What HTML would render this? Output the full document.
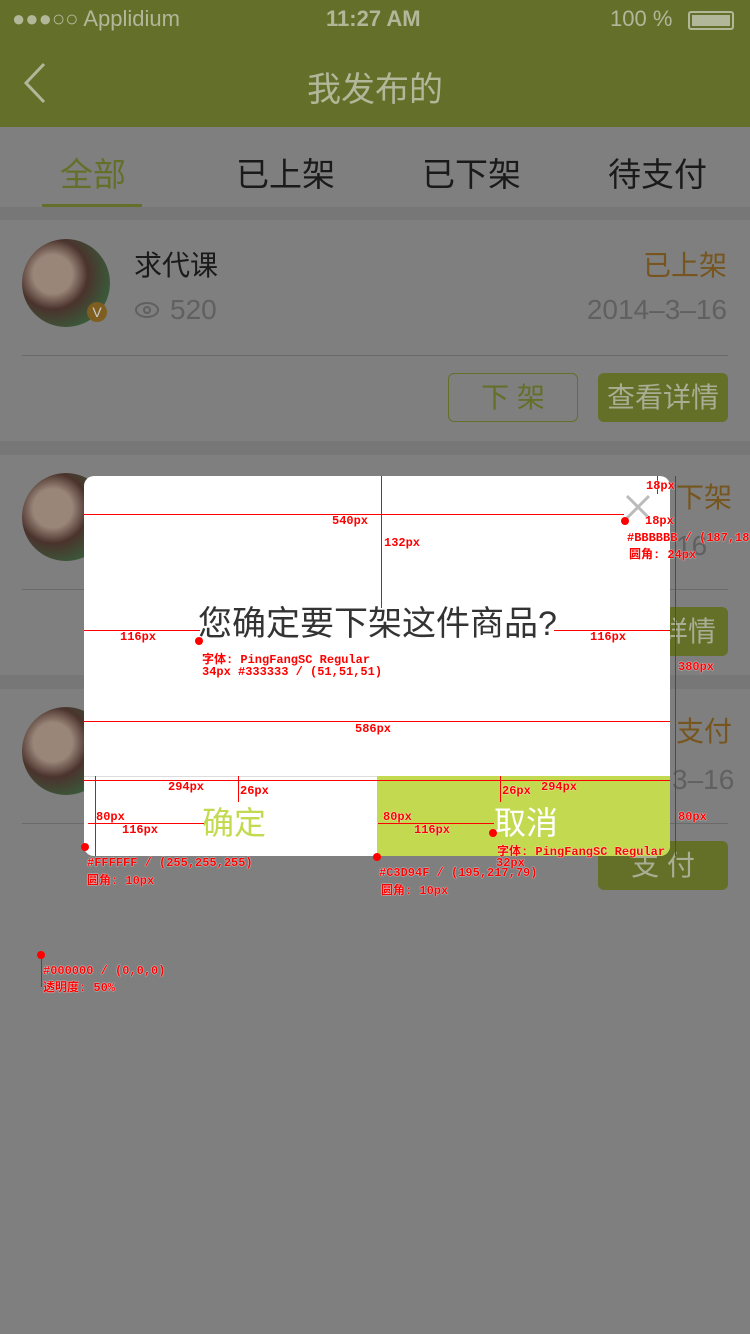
<!DOCTYPE html>
<html><head><meta charset="utf-8"><style>
*{margin:0;padding:0;box-sizing:border-box}
body{width:750px;height:1334px;background:#7f7f7f;position:relative;overflow:hidden;font-family:"Liberation Sans","Noto Sans CJK SC",sans-serif}
.a{position:absolute}
.r{position:absolute;background:#f00}
.lbl{position:absolute;color:#f00;font:bold 12px "Liberation Mono","Noto Sans CJK SC",monospace;white-space:nowrap;text-shadow:0 0 1px #fff,0 0 1px #fff}
.dot{position:absolute;width:8px;height:8px;border-radius:50%;background:#f00}
.av{position:absolute;width:88px;height:88px;border-radius:50%;background:radial-gradient(circle at 35% 40%,#9a8579 0 25%,#4a332c 45%,#3a5a3a 75%,#6d6d6d 100%)}
</style></head><body>
<!-- status + nav -->
<div class="a" style="left:0;top:0;width:750px;height:127px;background:#646f2a"></div>
<div class="a" style="left:12px;top:6px;color:#b2b79a;font-size:22px">●●●○○ Applidium</div>
<div class="a" style="left:326px;top:6px;color:#b2b79a;font-size:22px;font-weight:bold">11:27 AM</div>
<div class="a" style="left:610px;top:6px;color:#b2b79a;font-size:22px">100 %</div>
<div class="a" style="left:688px;top:11px;width:46px;height:19px;border:2px solid #b2b79a;border-radius:3px;padding:2px"><div style="background:#b2b79a;height:100%"></div></div>
<svg class="a" style="left:20px;top:60px" width="30" height="46"><path d="M24 4 L6 23 L24 42" stroke="#b2b79a" stroke-width="3" fill="none"/></svg>
<div class="a" style="left:0;top:62px;width:750px;text-align:center;color:#b2b79a;font-size:34px">我发布的</div>
<!-- tabs -->
<div class="a" style="left:0;top:127px;width:750px;height:80px;background:#7f7f7f"></div>
<div class="a" style="left:60px;top:148px;color:#64702a;font-size:33px">全部</div>
<div class="a" style="left:42px;top:204px;width:100px;height:4px;background:#64702a"></div>
<div class="a" style="left:236px;top:148px;color:#1a1a1a;font-size:33px">已上架</div>
<div class="a" style="left:422px;top:148px;color:#1a1a1a;font-size:33px">已下架</div>
<div class="a" style="left:608px;top:148px;color:#1a1a1a;font-size:33px">待支付</div>
<div class="a" style="left:0;top:207px;width:750px;height:13px;background:#777"></div>
<!-- card 1 -->
<div class="av" style="left:22px;top:239px"></div>
<div class="a" style="left:87px;top:302px;width:20px;height:20px;border-radius:50%;background:#7e5f20;color:#ccc;font-size:14px;text-align:center;line-height:20px">V</div>
<div class="a" style="left:134px;top:244px;color:#1a1a1a;font-size:28px">求代课</div>
<svg class="a" style="left:134px;top:300px" width="26" height="20"><ellipse cx="13" cy="10" rx="11" ry="7" stroke="#606060" stroke-width="2" fill="none"/><circle cx="13" cy="10" r="3" stroke="#606060" stroke-width="2" fill="none"/></svg>
<div class="a" style="left:170px;top:294px;color:#606060;font-size:28px">520</div>
<div class="a" style="right:23px;top:244px;color:#76561e;font-size:28px">已上架</div>
<div class="a" style="right:23px;top:294px;color:#606060;font-size:28px">2014–3–16</div>
<div class="a" style="left:22px;top:355px;width:706px;height:1px;background:#6a6a6a"></div>
<div class="a" style="left:448px;top:373px;width:130px;height:49px;border:1px solid #64702a;border-radius:6px;color:#64702a;font-size:28px;text-align:center;line-height:47px">下 架</div>
<div class="a" style="left:598px;top:373px;width:130px;height:49px;background:#646f27;border-radius:6px;color:#a9ad94;font-size:28px;text-align:center;line-height:49px">查看详情</div>
<div class="a" style="left:0;top:441px;width:750px;height:14px;background:#777"></div>
<!-- card 2 -->
<div class="av" style="left:22px;top:473px"></div>
<div class="a" style="left:676px;top:476px;color:#76561e;font-size:28px">下架</div>
<div class="a" style="left:676px;top:530px;color:#606060;font-size:28px">16</div>
<div class="a" style="left:22px;top:589px;width:706px;height:1px;background:#6a6a6a"></div>
<div class="a" style="left:598px;top:607px;width:130px;height:49px;background:#646f27;border-radius:6px;color:#a9ad94;font-size:28px;text-align:right;padding-right:12px;line-height:49px">详情</div>
<div class="a" style="left:0;top:675px;width:750px;height:14px;background:#777"></div>
<!-- card 3 -->
<div class="av" style="left:22px;top:707px"></div>
<div class="a" style="left:676px;top:710px;color:#76561e;font-size:28px">支付</div>
<div class="a" style="left:672px;top:764px;color:#606060;font-size:28px">3–16</div>
<div class="a" style="left:22px;top:823px;width:706px;height:1px;background:#6a6a6a"></div>
<div class="a" style="left:598px;top:841px;width:130px;height:49px;background:#646f27;border-radius:6px;color:#a9ad94;font-size:28px;text-align:center;line-height:49px">支 付</div>
<div class="a" style="left:0;top:908px;width:750px;height:426px;background:#7f7f7f"></div>
<!-- dialog -->
<div class="a" style="left:84px;top:476px;width:586px;height:380px;background:#fff;border-radius:10px;overflow:hidden">
 <div class="a" style="left:0;top:300px;width:293px;height:80px;border-top:1px solid #ddd"></div>
 <div class="a" style="left:293px;top:300px;width:293px;height:80px;background:#c3d94f"></div>
</div>
<svg class="a" style="left:625px;top:494px" width="26" height="26"><path d="M2 2L24 24M24 2L2 24" stroke="#bbb" stroke-width="3"/></svg>
<div class="a" style="left:198px;top:604px;color:#333;font-size:34px;line-height:40px">您确定要下架这件商品?</div>
<div class="a" style="left:202px;top:798px;color:#c3d94f;font-size:32px">确定</div>
<div class="a" style="left:494px;top:798px;color:#fff;font-size:32px">取消</div>
<!-- annotations -->
<div class="r" style="left:84px;top:514px;width:540px;height:1px"></div>
<div class="r" style="left:381px;top:476px;width:1px;height:132px"></div>
<div class="r" style="left:84px;top:630px;width:116px;height:1px"></div>
<div class="r" style="left:554px;top:630px;width:116px;height:1px"></div>
<div class="r" style="left:84px;top:721px;width:586px;height:1px"></div>
<div class="r" style="left:84px;top:780px;width:586px;height:1px"></div>
<div class="r" style="left:675px;top:476px;width:1px;height:380px"></div>
<div class="r" style="left:95px;top:776px;width:1px;height:80px"></div>
<div class="r" style="left:88px;top:823px;width:116px;height:1px"></div>
<div class="r" style="left:378px;top:823px;width:116px;height:1px"></div>
<div class="r" style="left:238px;top:776px;width:1px;height:26px"></div>
<div class="r" style="left:500px;top:776px;width:1px;height:26px"></div>
<div class="r" style="left:657px;top:476px;width:1px;height:18px"></div>
<div class="lbl" style="left:332px;top:514px">540px</div>
<div class="lbl" style="left:384px;top:536px">132px</div>
<div class="lbl" style="left:120px;top:630px">116px</div>
<div class="lbl" style="left:590px;top:630px">116px</div>
<div class="lbl" style="left:355px;top:722px">586px</div>
<div class="lbl" style="left:678px;top:660px">380px</div>
<div class="lbl" style="left:168px;top:780px">294px</div>
<div class="lbl" style="left:240px;top:784px">26px</div>
<div class="lbl" style="left:502px;top:784px">26px</div>
<div class="lbl" style="left:541px;top:780px">294px</div>
<div class="lbl" style="left:96px;top:810px">80px</div>
<div class="lbl" style="left:122px;top:823px">116px</div>
<div class="lbl" style="left:383px;top:810px">80px</div>
<div class="lbl" style="left:414px;top:823px">116px</div>
<div class="lbl" style="left:678px;top:810px">80px</div>
<div class="lbl" style="left:646px;top:479px">18px</div>
<div class="lbl" style="left:645px;top:514px">18px</div>
<div class="dot" style="left:621px;top:517px"></div>
<div class="lbl" style="left:627px;top:531px">#BBBBBB / (187,187,1</div>
<div class="lbl" style="left:629px;top:545px">圆角: 24px</div>
<div class="dot" style="left:195px;top:637px"></div>
<div class="lbl" style="left:202px;top:650px">字体: PingFangSC Regular</div>
<div class="lbl" style="left:202px;top:665px">34px #333333 / (51,51,51)</div>
<div class="dot" style="left:81px;top:843px"></div>
<div class="lbl" style="left:87px;top:856px">#FFFFFF / (255,255,255)</div>
<div class="lbl" style="left:87px;top:871px">圆角: 10px</div>
<div class="dot" style="left:373px;top:853px"></div>
<div class="lbl" style="left:379px;top:866px">#C3D94F / (195,217,79)</div>
<div class="lbl" style="left:381px;top:881px">圆角: 10px</div>
<div class="dot" style="left:489px;top:829px"></div>
<div class="lbl" style="left:497px;top:842px">字体: PingFangSC Regular</div>
<div class="lbl" style="left:496px;top:856px">32px</div>
<div class="dot" style="left:37px;top:951px"></div>
<div class="r" style="left:41px;top:955px;width:1px;height:32px"></div>
<div class="lbl" style="left:43px;top:964px">#000000 / (0,0,0)</div>
<div class="lbl" style="left:43px;top:978px">透明度: 50%</div>
</body></html>
